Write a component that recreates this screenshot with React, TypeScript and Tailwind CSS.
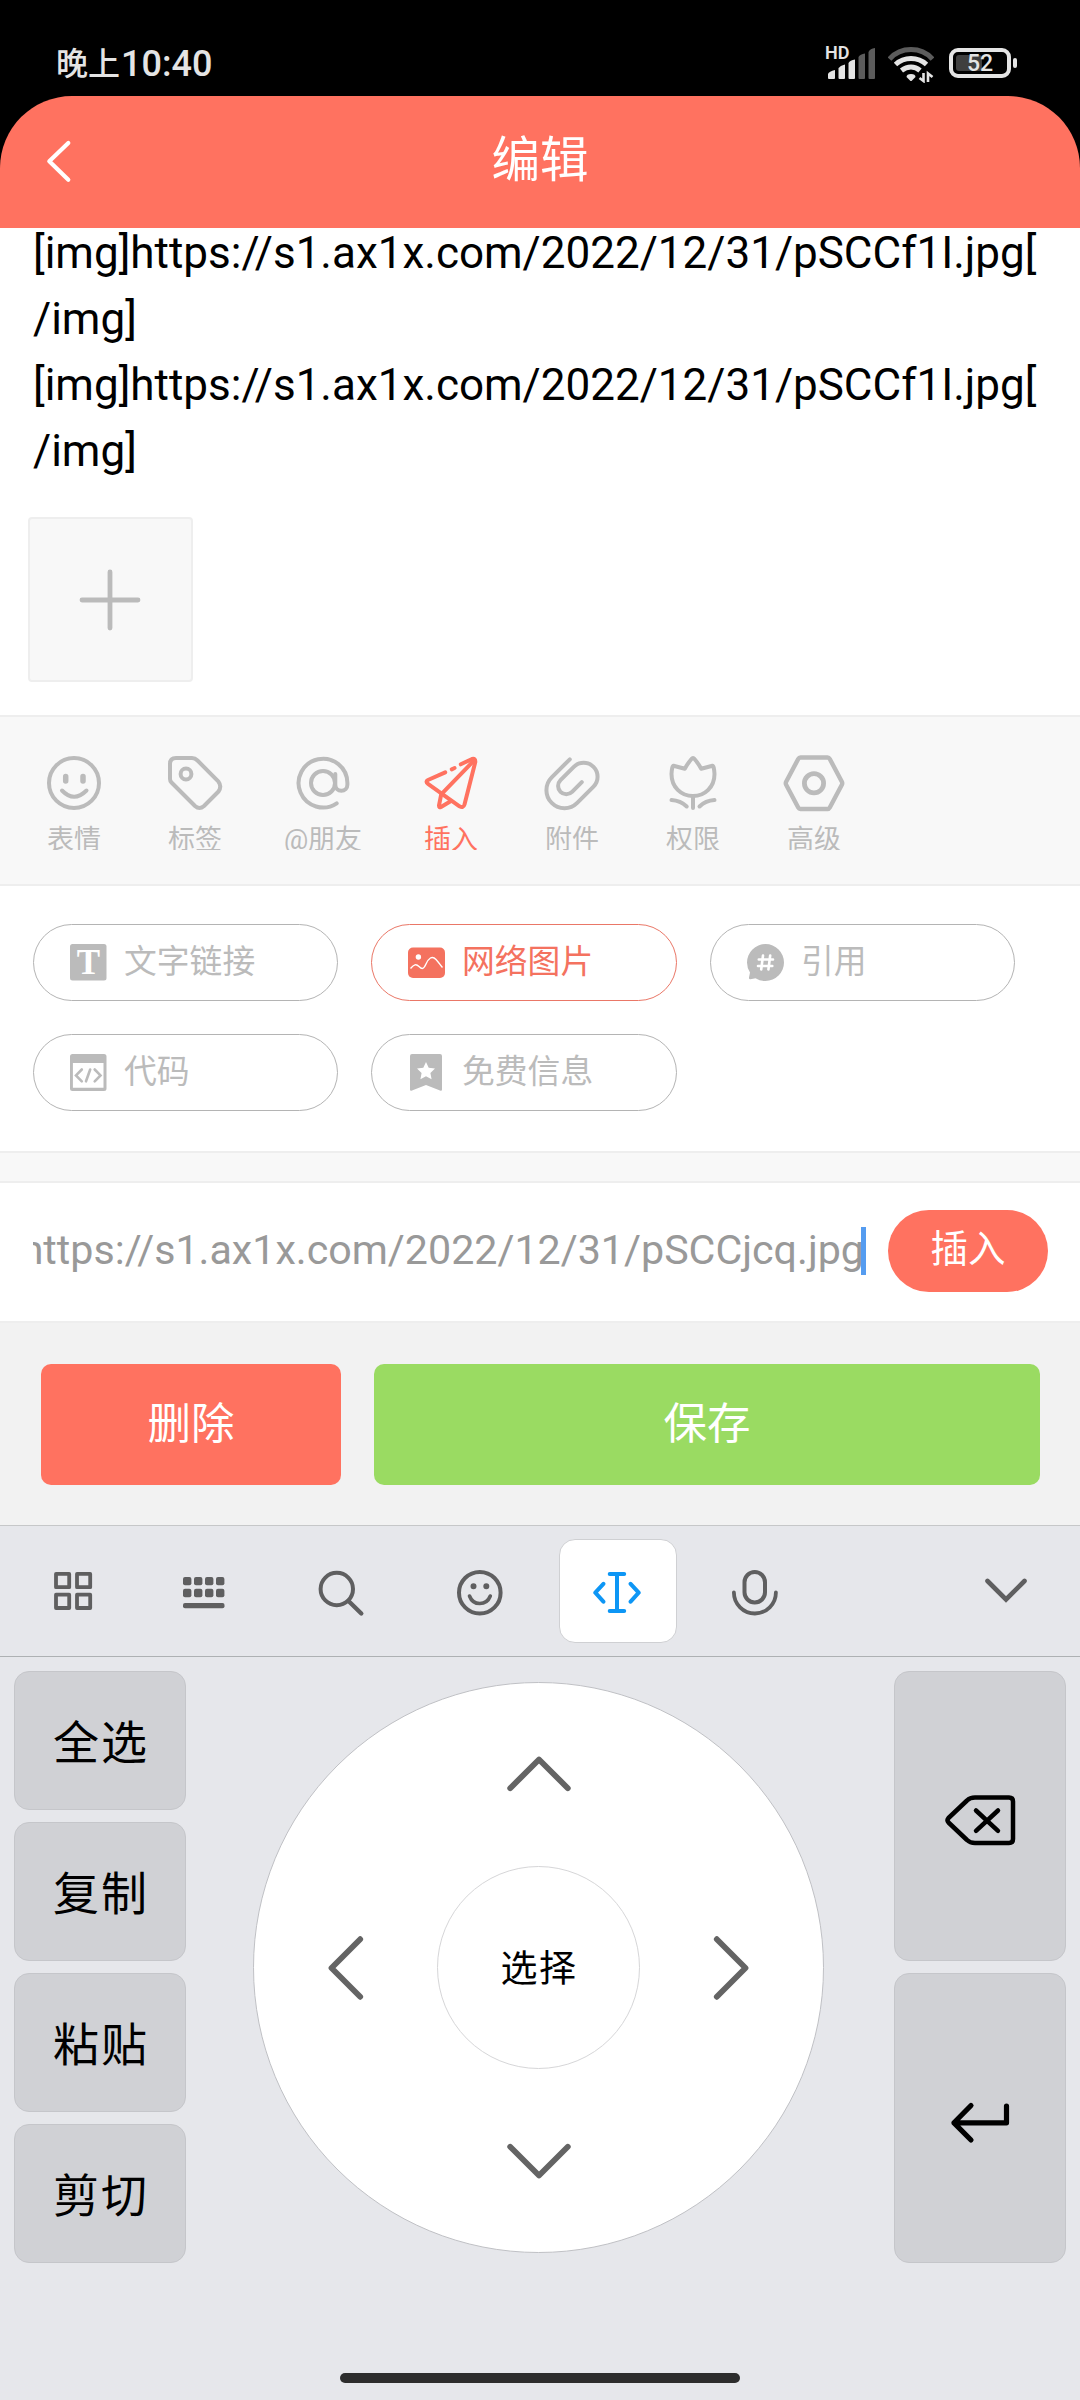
import React, { useState } from 'react';
import clsx from 'clsx';

type IconProps = { className?: string };

/* ---------- status bar ---------- */

const SignalIcon = () => (
  <svg width="50" height="32" viewBox="0 0 50 32" fill="#e4e4e4">
    <path d="M2 31V27Q3 24.500 9 23V31Q9 32 8 32H3Q2 32 2 31Z" />
    <path d="M12.500 31V21.500Q14 18.500 19 17.500V31Q19 32 18 32H13.500Q12.500 32 12.500 31Z" />
    <path d="M22.500 31V16Q24 13 29 12.500V31Q29 32 28 32H23.500Q22.500 32 22.500 31Z" />
    <path d="M32.500 31V10Q34 7 39 6.500V31Q39 32 38 32H33.500Q32.500 32 32.500 31Z" fill="#5c5c5c" />
    <path d="M42.500 31V5Q44 1.500 49 1V31Q49 32 48 32H43.500Q42.500 32 42.500 31Z" fill="#5c5c5c" />
  </svg>
);

const WifiIcon = () => (
  <svg width="46" height="36" viewBox="0 0 46 36" fill="none" stroke="#e4e4e4" strokeWidth="5">
    <path d="M1.500 12Q10 2.500 23 2.500T44.500 12" stroke="#5c5c5c" />
    <path d="M7.500 17.500Q14 11.500 23 11.500T38.500 17.500" />
    <path d="M13.500 23.500Q18 20 23 20T32 23.500" />
    <path d="M18.500 30Q18.500 27 23 27T27.500 30L24 33.500Q23 34.500 22 33.500Z" fill="#e4e4e4" stroke="none" />
    <path d="M35.500 26V34L31.500 31M40 35V26.500L44.500 30" strokeWidth="2.600" />
  </svg>
);

const StatusBar = () => (
  <div className="flex h-24 items-start justify-between pl-[56px] pr-[69px] text-[#e4e4e4]">
    <div className="mt-[43px] flex items-center font-['Roboto','Noto_Sans_CJK_SC',sans-serif] text-[36px] font-medium leading-[42px]">
      <span className="text-[32px]">晚上</span>
      <span className="ml-px">10:40</span>
    </div>
    <div className="mt-[47px] flex items-start">
      <div className="relative mr-[12px] w-[50px]">
        <span className="absolute -top-[4px] -left-px text-[18px] font-semibold leading-5">HD</span>
        <SignalIcon />
      </div>
      <WifiIcon />
      <div className="relative ml-[15px] mt-px flex h-[30px] w-[62px] items-center rounded-[9px] border-4 border-[#e4e4e4] pl-[3px]">
        <div className="h-4 w-[26px] rounded-[3px] bg-[#3f3f3f]" />
        <span className="absolute inset-0 flex items-center justify-center pt-px text-[23px] font-medium leading-none">52</span>
        <span className="absolute -right-[10px] top-[6px] h-[10px] w-1 rounded-full bg-[#e4e4e4]" />
      </div>
    </div>
  </div>
);

/* ---------- editor toolbar ---------- */

const toolSvg = {
  width: 64,
  height: 58,
  viewBox: '0 0 64 58',
  fill: 'none',
  stroke: 'currentColor',
  strokeWidth: 4,
  strokeLinecap: 'round',
  strokeLinejoin: 'round',
} as const;

const EmojiIcon = () => (
  <svg {...toolSvg}>
    <circle cx="32" cy="28" r="25" />
    <path d="M23.700 21.500V26M41 21.500V26" strokeWidth="5.500" />
    <path d="M20 35.500Q32 48 44.500 35.500" />
  </svg>
);

const TagIcon = () => (
  <svg {...toolSvg}>
    <path d="M13 3H29Q32 3 34.500 5.500L55.500 26.700Q59 31.500 55.500 36.500L41 51Q36.500 55 32 51L8.500 27.500Q7 26 7 24V9Q7 3 13 3Z" />
    <circle cx="23" cy="19" r="5.400" />
  </svg>
);

const AtIcon = () => (
  <svg {...toolSvg}>
    <circle cx="32" cy="28" r="12" />
    <path d="M44.300 19V29.700a6 6 0 0 0 12.100 0V28A24.400 24.400 0 1 0 45.700 48.300" />
  </svg>
);

const PlaneIcon = () => (
  <svg {...toolSvg}>
    <path d="M26.200 17.300L9 25Q6 26.700 9 28.800L40.500 51.300Q44.300 53.500 45.500 49.500L56.300 7Q56.500 3 53 4L41.800 9.300" />
    <path d="M32.700 14.300L35.600 13" />
    <path d="M55 5.500L22.200 39.300L20 50.500Q20 53 22 52L32 46" />
  </svg>
);

const ClipIcon = () => (
  <svg {...toolSvg}>
    <path d="M29.800 4.300L11.700 22.400A18 18 0 0 0 37.200 47.900L53.500 31.600A13.900 13.900 0 0 0 33.800 11.900L20.500 25.200A8.200 8.200 0 0 0 32.100 36.800L41.800 27.100" />
  </svg>
);

const TulipIcon = () => (
  <svg {...toolSvg}>
    <path d="M12.500 10.700L23.800 13.700Q27 8 30.500 4Q32 2 33.500 4Q37 8 40.200 13.700L51.500 10.700Q53 10.500 53.500 19C53.500 32 44 41 32 41S10.500 32 10.500 19Q11 10.500 12.500 10.700Z" />
    <path d="M32 41V53M10.500 45Q19.500 45.500 25.700 51.500M53.500 45Q44.500 45.500 38.500 51.500" />
  </svg>
);

const HexIcon = () => (
  <svg {...toolSvg} strokeWidth={4.4}>
    <path d="M18.500 2.500H45.500Q47 2.500 47.800 4L60 27Q60.500 28.200 60 29.500L47.800 52.500Q47 54 45.500 54H18.500Q17 54 16.200 52.500L4 29.500Q3.500 28.200 4 27L16.200 4Q17 2.500 18.500 2.500Z" />
    <circle cx="32" cy="28.300" r="9.600" strokeWidth="4.800" />
  </svg>
);

const TOOLS = [
  { label: '表情', Icon: EmojiIcon },
  { label: '标签', Icon: TagIcon },
  { label: '@朋友', Icon: AtIcon, wide: true },
  { label: '插入', Icon: PlaneIcon },
  { label: '附件', Icon: ClipIcon },
  { label: '权限', Icon: TulipIcon },
  { label: '高级', Icon: HexIcon },
];

/* ---------- insert options ---------- */

const TextLinkIcon = () => (
  <svg width="37" height="37" viewBox="0 0 37 37">
    <rect width="36.500" height="36.500" rx="2.500" fill="currentColor" />
    <text x="18.500" y="30" textAnchor="middle" fill="#fff" className="font-['Liberation_Serif',serif] text-[35px] font-bold">
      T
    </text>
  </svg>
);

const PictureIcon = () => (
  <svg width="37" height="37" viewBox="0 0 37 37">
    <rect y="3.500" width="37" height="30.500" rx="5" fill="currentColor" />
    <circle cx="10.400" cy="13" r="2.700" fill="#fff" />
    <path d="M2.500 24.500C6 20.500 8 19.500 11 22.500S15.500 25.500 18 20S24 11 28 15.500S32.500 21.500 34.500 23.500" fill="none" stroke="#fff" strokeWidth="1.400" />
  </svg>
);

const QuoteIcon = () => (
  <svg width="37" height="37" viewBox="0 0 37 37">
    <path d="M18.500 0A18.500 18.500 0 1 1 18.500 37Q13 37 8.500 34.200L3.500 35.300Q1.700 35.500 2 33.500L3 28.500Q0 24 0 18.500A18.500 18.500 0 0 1 18.500 0Z" fill="currentColor" />
    <path d="M16 11.500L14.200 25.500M23.200 11.500L21.400 25.500M11.800 15.500H26M11 22H25.300" stroke="#fff" strokeWidth="2.600" strokeLinecap="round" />
  </svg>
);

const CodeIcon = () => (
  <svg width="37" height="37" viewBox="0 0 37 37">
    <path fillRule="evenodd" d="M2.500 0H34Q36.500 0 36.500 2.500V34.500Q36.500 37 34 37H2.500Q0 37 0 34.500V2.500Q0 0 2.500 0ZM2.900 9V33.800H33.500V9Z" fill="currentColor" />
    <path d="M11.800 15.500L6 21.400L11.800 27.300M24.700 15.500L30.500 21.400L24.700 27.300M20.200 15.500L16 27.300" fill="none" stroke="currentColor" strokeWidth="2.600" strokeLinecap="round" />
  </svg>
);

const BookmarkIcon = () => (
  <svg width="37" height="37" viewBox="0 0 37 37">
    <path d="M4 0H32Q34 0 34 2V35.500Q34 37.200 32 36.500L18 31L4 36.500Q2 37.200 2 35.500V2Q2 0 4 0Z" fill="currentColor" />
    <path d="M18 8L20.700 13.800L27 14.600L22.400 19L23.600 25.300L18 22.200L12.400 25.300L13.600 19L9 14.600L15.300 13.800Z" fill="#fff" />
  </svg>
);

const OPTIONS = [
  { label: '文字链接', Icon: TextLinkIcon },
  { label: '网络图片', Icon: PictureIcon },
  { label: '引用', Icon: QuoteIcon },
  { label: '代码', Icon: CodeIcon },
  { label: '免费信息', Icon: BookmarkIcon },
];

/* ---------- keyboard ---------- */

const kbSvg = {
  width: 50,
  height: 50,
  viewBox: '0 0 50 50',
  fill: 'none',
  stroke: '#5f5f60',
  strokeWidth: 4,
  strokeLinecap: 'round',
  strokeLinejoin: 'round',
} as const;

const GridIcon = () => (
  <svg {...kbSvg} strokeWidth={3.8}>
    <rect x="8" y="5.900" width="13.200" height="13.300" />
    <rect x="29" y="5.900" width="13.200" height="13.300" />
    <rect x="8" y="26.700" width="13.200" height="13.300" />
    <rect x="29" y="26.700" width="13.200" height="13.300" />
  </svg>
);

const KeyboardIcon = () => (
  <svg {...kbSvg} fill="#5f5f60" stroke="none">
    {[4, 15, 26, 37].map((x) => (
      <React.Fragment key={x}>
        <rect x={x} y="9" width="8.400" height="8.300" rx="2" />
        <rect x={x} y="20.800" width="8.400" height="8.500" rx="2" />
      </React.Fragment>
    ))}
    <rect x="4" y="35" width="41.500" height="5.300" rx="2" />
  </svg>
);

const SearchIcon = () => (
  <svg {...kbSvg}>
    <circle cx="20.800" cy="21" r="16.200" />
    <path d="M32.500 33L45.300 45.500" strokeWidth="4.400" />
  </svg>
);

const SmileIcon = () => (
  <svg {...kbSvg}>
    <circle cx="24.800" cy="24.700" r="20.800" />
    <path d="M18.500 18.300h.01M31.300 18.300h.01" strokeWidth="6" />
    <path d="M14.500 28Q17.300 35.500 24.800 35.500T35.300 28" strokeWidth="3.600" />
  </svg>
);

const CursorIcon = () => (
  <svg {...kbSvg} stroke="#0d96f5">
    <path d="M16.700 6H31.200M16.700 43H31.200M24 6V43M10.400 15.800L2.300 24.700L10.400 33.700M37.600 15.800L45.700 24.700L37.600 33.700" />
  </svg>
);

const MicIcon = () => (
  <svg {...kbSvg}>
    <rect x="14.500" y="4" width="20.500" height="30.500" rx="10.200" />
    <path d="M3.900 24.500a21 21 0 0 0 42 0" strokeWidth="3.800" />
  </svg>
);

const CollapseIcon = () => (
  <svg width="42" height="26" viewBox="0 0 42 26" fill="none" stroke="#5f5f60" strokeWidth="4.600" strokeLinecap="round">
    <path d="M2.500 3L21 21.500L39.500 3" />
  </svg>
);

const Arrow = ({ className }: IconProps) => (
  <svg className={className} width="64" height="36" viewBox="0 0 64 36" fill="none" stroke="#646464" strokeWidth="5.800" strokeLinecap="round" strokeLinejoin="round">
    <path d="M3.200 32.200L32 3.500L60.800 32.200" />
  </svg>
);

const BackspaceIcon = () => (
  <svg width="72" height="53" viewBox="0 0 72 53" fill="none" stroke="#000" strokeWidth="4.500" strokeLinecap="round" strokeLinejoin="round">
    <path d="M31 3.500H65Q69 3.500 69 7.500V45Q69 49 65 49H31Q26 49 23 46L4.500 28.500Q2.500 26.300 4.500 24L23 6.500Q26 3.500 31 3.500Z" />
    <path d="M32 16.500L54 36.800M54 16.500L32 36.800" />
  </svg>
);

const EnterIcon = () => (
  <svg width="62" height="46" viewBox="0 0 62 46" fill="none" stroke="#000" strokeWidth="5.200" strokeLinecap="round" strokeLinejoin="round">
    <path d="M56.500 6V22.800H4M21 5.500L4 22.800L21 40" />
  </svg>
);

const EDIT_KEYS = ['全选', '复制', '粘贴', '剪切'];

const Keyboard = () => (
  <div className="flex flex-1 flex-col border-t border-[#c6c7c8] bg-[#e6e7eb]">
    <div className="flex h-[131px] items-center justify-between border-b border-[#aeb1b3] pl-2 pr-[53px]">
      <div className="grid grid-cols-[130px_132px_142px_136px_140px_134px] items-center justify-items-center [&>svg]:mt-1">
        <GridIcon />
        <KeyboardIcon />
        <SearchIcon />
        <SmileIcon />
        <div className="flex h-[104px] w-[118px] items-center justify-center rounded-[16px] border border-[#cfd0d3] bg-white pt-[3px]">
          <CursorIcon />
        </div>
        <MicIcon />
      </div>
      <CollapseIcon />
    </div>

    <div className="flex justify-between px-[14px] pt-[14px]">
      <div className="flex flex-col gap-3">
        {EDIT_KEYS.map((key) => (
          <button
            key={key}
            className="h-[139px] w-[172px] rounded-[15px] border border-[#c5c6ca] bg-[#d0d1d5] pl-[2px] pt-[5px] text-[46px] leading-none tracking-[2px] text-black"
          >
            {key}
          </button>
        ))}
      </div>

      <div className="mr-[3px] mt-[11px] flex h-[571px] w-[571px] flex-col items-center justify-between rounded-full border border-[#c0c1c5] bg-white py-[73px]">
        <Arrow />
        <div className="flex w-full items-center justify-between px-[60px]">
          <Arrow className="-rotate-90" />
          <button className="-my-10 h-[203px] w-[203px] rounded-full border-[1.5px] border-[#d6d6d8] pl-px pt-[5px] text-[37px] tracking-[1.5px] text-black">
            选择
          </button>
          <Arrow className="rotate-90" />
        </div>
        <Arrow className="rotate-180" />
      </div>

      <div className="flex flex-col gap-3">
        <button className="flex h-[290px] w-[172px] items-center justify-center rounded-[15px] border border-[#c5c6ca] bg-[#d0d1d5] pt-[8px]">
          <BackspaceIcon />
        </button>
        <button className="flex h-[290px] w-[172px] items-center justify-center rounded-[15px] border border-[#c5c6ca] bg-[#d0d1d5] pl-[2px] pt-[10px]">
          <EnterIcon />
        </button>
      </div>
    </div>

    <div className="mx-auto mb-[17px] mt-auto h-[10px] w-[400px] rounded-full bg-[#2d2d2d]" />
  </div>
);

const IMG_TAG = '[img]https://s1.ax1x.com/2022/12/31/pSCCf1I.jpg[';

const App: React.FC = () => {
  const [tool, setTool] = useState('插入');
  const [option, setOption] = useState('网络图片');

  return (
    <div className="flex h-[2400px] w-[1080px] flex-col overflow-hidden bg-black font-['Roboto','Noto_Sans_CJK_SC',sans-serif]">
      <StatusBar />

      <header className="grid h-[132px] grid-cols-[1fr_auto_1fr] items-center rounded-t-[72px] bg-[#ff7260] px-[46px] text-white">
        <svg width="26" height="44" viewBox="0 0 26 44" fill="none" stroke="#fff" strokeWidth="4.200" strokeLinecap="round" strokeLinejoin="round">
          <path d="M22.300 3L3.300 21.300L22.300 39.800" />
        </svg>
        <h1 className="-mt-px text-[48.5px] leading-none">编辑</h1>
      </header>

      <div className="flex h-[487px] flex-col items-start bg-white pl-[28px]">
        <div className="h-[289px] pl-[5px] text-[44px] leading-[66px] text-black">
          <div className="-mt-2">
            <p className="whitespace-nowrap">{IMG_TAG}</p>
            <p>/img]</p>
            <p className="whitespace-nowrap">{IMG_TAG}</p>
            <p>/img]</p>
          </div>
        </div>
        <button className="flex h-[165px] w-[165px] items-center justify-center rounded-[4px] border-2 border-[#eee] bg-[#f8f8f8] pr-[2px]">
          <svg width="62" height="62" viewBox="0 0 62 62" stroke="#bbb" strokeWidth="4.800" strokeLinecap="round">
            <path d="M31 3V59M3 31H59" />
          </svg>
        </button>
      </div>

      <nav className="flex h-[171px] items-start border-y-2 border-[#eee] bg-[#f8f8f8] pl-[13.5px] pt-[38px]">
        {TOOLS.map(({ label, Icon, wide }) => (
          <button
            key={label}
            onClick={() => setTool(label)}
            className={clsx(
              'flex flex-col items-center',
              wide ? 'w-[135px]' : 'w-[121px]',
              tool === label ? 'text-[#ff7260]' : 'text-[#bbb]',
            )}
          >
            <Icon />
            <span className="mt-3 h-[25px] overflow-hidden text-[27px] leading-[30px]">{label}</span>
          </button>
        ))}
      </nav>

      <div className="grid h-[265px] grid-cols-[305px_306px_305px] content-start gap-[33px] bg-white pl-[33px] pt-[38px]">
        {OPTIONS.map(({ label, Icon }) => (
          <button
            key={label}
            onClick={() => setOption(label)}
            className={clsx(
              'flex h-[77px] items-center gap-[17px] rounded-full border pl-9',
              option === label ? 'border-[#ea7767] text-[#f4725f]' : 'border-[#b4b4b4] text-[#bbb]',
            )}
          >
            <Icon />
            <span className="text-[32.8px] leading-none">{label}</span>
          </button>
        ))}
      </div>

      <div className="h-8 border-y-2 border-[#eee] bg-[#f8f8f8]" />

      <div className="flex h-[140px] items-center justify-between border-b-2 border-[#eee] bg-white pb-[2px] pl-[33px] pr-8">
        <div className="flex h-12 w-[833px] items-start justify-end overflow-hidden">
          <span className="whitespace-nowrap text-[41.200px] leading-[46px] text-[#999]">
            https://s1.ax1x.com/2022/12/31/pSCCjcq.jpg
          </span>
          <span className="-ml-[3px] h-12 w-[5px] shrink-0 bg-[#559cf0]" />
        </div>
        <button className="h-[82px] w-[160px] rounded-full bg-[#ff7260] pb-[2px] text-[37.5px] leading-none text-white">
          插入
        </button>
      </div>

      <div className="flex h-[202px] gap-[33px] bg-[#f2f2f2] pl-[41px] pr-10 pt-[41px]">
        <button className="h-[121px] w-[300px] rounded-[10px] bg-[#ff7260] text-[43.5px] leading-none text-white">删除</button>
        <button className="h-[121px] flex-1 rounded-[10px] bg-[#9adb62] text-[43.5px] leading-none text-white">保存</button>
      </div>

      <Keyboard />
    </div>
  );
};

export default App;
